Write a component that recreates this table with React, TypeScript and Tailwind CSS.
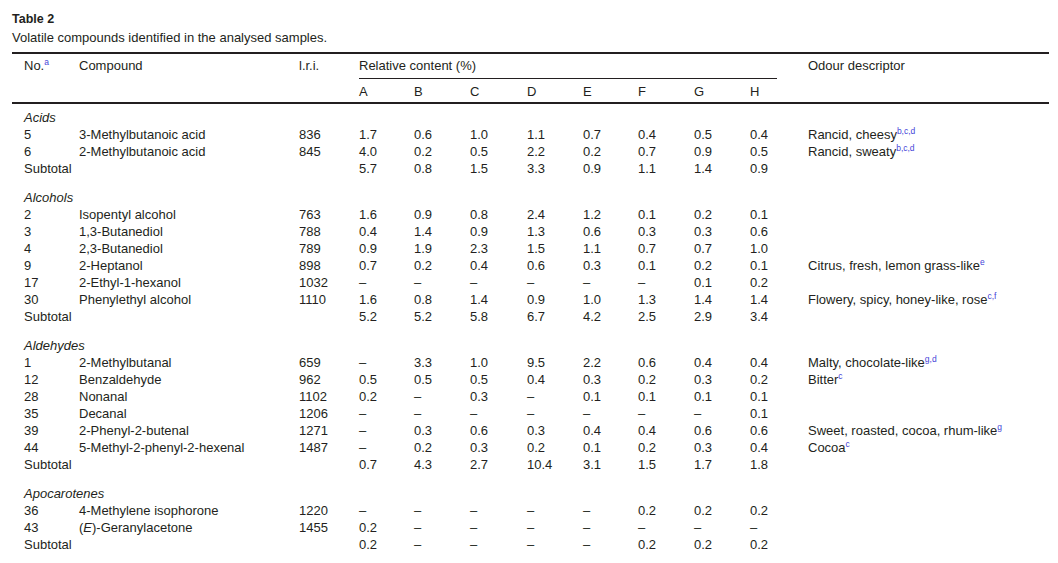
import type { ReactNode } from 'react'

type Row = {
  no: string
  name: ReactNode
  lri: string
  values: string[]
  odour?: ReactNode
}

type Group = {
  title: string
  rows: Row[]
  subtotal: string[]
}

const D = '–'

function Sup({ children }: { children: ReactNode }) {
  return <sup className="relative -top-[5px] align-baseline text-[8.5px] text-[#4545d8]">{children}</sup>
}

const groups: Group[] = [
  {
    title: 'Acids',
    rows: [
      {
        no: '5',
        name: '3-Methylbutanoic acid',
        lri: '836',
        values: ['1.7', '0.6', '1.0', '1.1', '0.7', '0.4', '0.5', '0.4'],
        odour: (
          <>
            Rancid, cheesy<Sup>b,c,d</Sup>
          </>
        ),
      },
      {
        no: '6',
        name: '2-Methylbutanoic acid',
        lri: '845',
        values: ['4.0', '0.2', '0.5', '2.2', '0.2', '0.7', '0.9', '0.5'],
        odour: (
          <>
            Rancid, sweaty<Sup>b,c,d</Sup>
          </>
        ),
      },
    ],
    subtotal: ['5.7', '0.8', '1.5', '3.3', '0.9', '1.1', '1.4', '0.9'],
  },
  {
    title: 'Alcohols',
    rows: [
      { no: '2', name: 'Isopentyl alcohol', lri: '763', values: ['1.6', '0.9', '0.8', '2.4', '1.2', '0.1', '0.2', '0.1'] },
      { no: '3', name: '1,3-Butanediol', lri: '788', values: ['0.4', '1.4', '0.9', '1.3', '0.6', '0.3', '0.3', '0.6'] },
      { no: '4', name: '2,3-Butanediol', lri: '789', values: ['0.9', '1.9', '2.3', '1.5', '1.1', '0.7', '0.7', '1.0'] },
      {
        no: '9',
        name: '2-Heptanol',
        lri: '898',
        values: ['0.7', '0.2', '0.4', '0.6', '0.3', '0.1', '0.2', '0.1'],
        odour: (
          <>
            Citrus, fresh, lemon grass-like<Sup>e</Sup>
          </>
        ),
      },
      { no: '17', name: '2-Ethyl-1-hexanol', lri: '1032', values: [D, D, D, D, D, D, '0.1', '0.2'] },
      {
        no: '30',
        name: 'Phenylethyl alcohol',
        lri: '1110',
        values: ['1.6', '0.8', '1.4', '0.9', '1.0', '1.3', '1.4', '1.4'],
        odour: (
          <>
            Flowery, spicy, honey-like, rose<Sup>c,f</Sup>
          </>
        ),
      },
    ],
    subtotal: ['5.2', '5.2', '5.8', '6.7', '4.2', '2.5', '2.9', '3.4'],
  },
  {
    title: 'Aldehydes',
    rows: [
      {
        no: '1',
        name: '2-Methylbutanal',
        lri: '659',
        values: [D, '3.3', '1.0', '9.5', '2.2', '0.6', '0.4', '0.4'],
        odour: (
          <>
            Malty, chocolate-like<Sup>g,d</Sup>
          </>
        ),
      },
      {
        no: '12',
        name: 'Benzaldehyde',
        lri: '962',
        values: ['0.5', '0.5', '0.5', '0.4', '0.3', '0.2', '0.3', '0.2'],
        odour: (
          <>
            Bitter<Sup>c</Sup>
          </>
        ),
      },
      { no: '28', name: 'Nonanal', lri: '1102', values: ['0.2', D, '0.3', D, '0.1', '0.1', '0.1', '0.1'] },
      { no: '35', name: 'Decanal', lri: '1206', values: [D, D, D, D, D, D, D, '0.1'] },
      {
        no: '39',
        name: '2-Phenyl-2-butenal',
        lri: '1271',
        values: [D, '0.3', '0.6', '0.3', '0.4', '0.4', '0.6', '0.6'],
        odour: (
          <>
            Sweet, roasted, cocoa, rhum-like<Sup>g</Sup>
          </>
        ),
      },
      {
        no: '44',
        name: '5-Methyl-2-phenyl-2-hexenal',
        lri: '1487',
        values: [D, '0.2', '0.3', '0.2', '0.1', '0.2', '0.3', '0.4'],
        odour: (
          <>
            Cocoa<Sup>c</Sup>
          </>
        ),
      },
    ],
    subtotal: ['0.7', '4.3', '2.7', '10.4', '3.1', '1.5', '1.7', '1.8'],
  },
  {
    title: 'Apocarotenes',
    rows: [
      { no: '36', name: '4-Methylene isophorone', lri: '1220', values: [D, D, D, D, D, '0.2', '0.2', '0.2'] },
      {
        no: '43',
        name: (
          <>
            (<span className="italic">E</span>)-Geranylacetone
          </>
        ),
        lri: '1455',
        values: ['0.2', D, D, D, D, D, D, D],
      },
    ],
    subtotal: ['0.2', D, D, D, D, '0.2', '0.2', '0.2'],
  },
]

const grid = 'grid grid-cols-[55px_220px_60px_55px_56px_57px_56px_55px_56px_56px_58px_1fr] pl-3'

function DataRow({ row }: { row: Row }) {
  return (
    <div className={`${grid} h-[17px] leading-[17px]`}>
      <span>{row.no}</span>
      <span className="whitespace-nowrap">{row.name}</span>
      <span>{row.lri}</span>
      {row.values.map((v, i) => (
        <span key={i}>{v}</span>
      ))}
      <span className="whitespace-nowrap">{row.odour}</span>
    </div>
  )
}

export default function App() {
  return (
    <div
      className="min-h-[563px] bg-white pl-3 pt-[11px] pr-[9px] text-[13px] text-[#231f20]"
      style={{ fontFamily: '"Liberation Sans", Arial, sans-serif' }}
    >
      <h1 className="text-[12.5px] font-bold leading-[17px]">Table 2</h1>
      <p className="mt-[1px] leading-[17px]">Volatile compounds identified in the analysed samples.</p>

      <div className="mt-[6px] border-t-2 border-[#231f20]">
        <div className={`${grid} grid-rows-[auto_auto] pt-[3px] leading-[17px]`}>
          <span className="row-span-2">
            No.<Sup>a</Sup>
          </span>
          <span className="row-span-2">Compound</span>
          <span className="row-span-2">l.r.i.</span>
          <div className="col-span-8">
            <div className="w-[418px] border-b border-[#231f20] pb-[4px]">Relative content (%)</div>
          </div>
          <span className="row-span-2">Odour descriptor</span>
          {['A', 'B', 'C', 'D', 'E', 'F', 'G', 'H'].map((l) => (
            <span key={l} className="pt-[4px] pb-[2px]">
              {l}
            </span>
          ))}
        </div>
      </div>

      <div className="border-t-2 border-[#231f20] pt-[5px]">
        {groups.map((g, gi) => (
          <div key={g.title} className={gi > 0 ? 'mt-[12px]' : ''}>
            <div className="h-[17px] pl-3 leading-[17px] italic">{g.title}</div>
            {g.rows.map((r, ri) => (
              <DataRow key={ri} row={r} />
            ))}
            <DataRow row={{ no: 'Subtotal', name: '', lri: '', values: g.subtotal }} />
          </div>
        ))}
      </div>
    </div>
  )
}
